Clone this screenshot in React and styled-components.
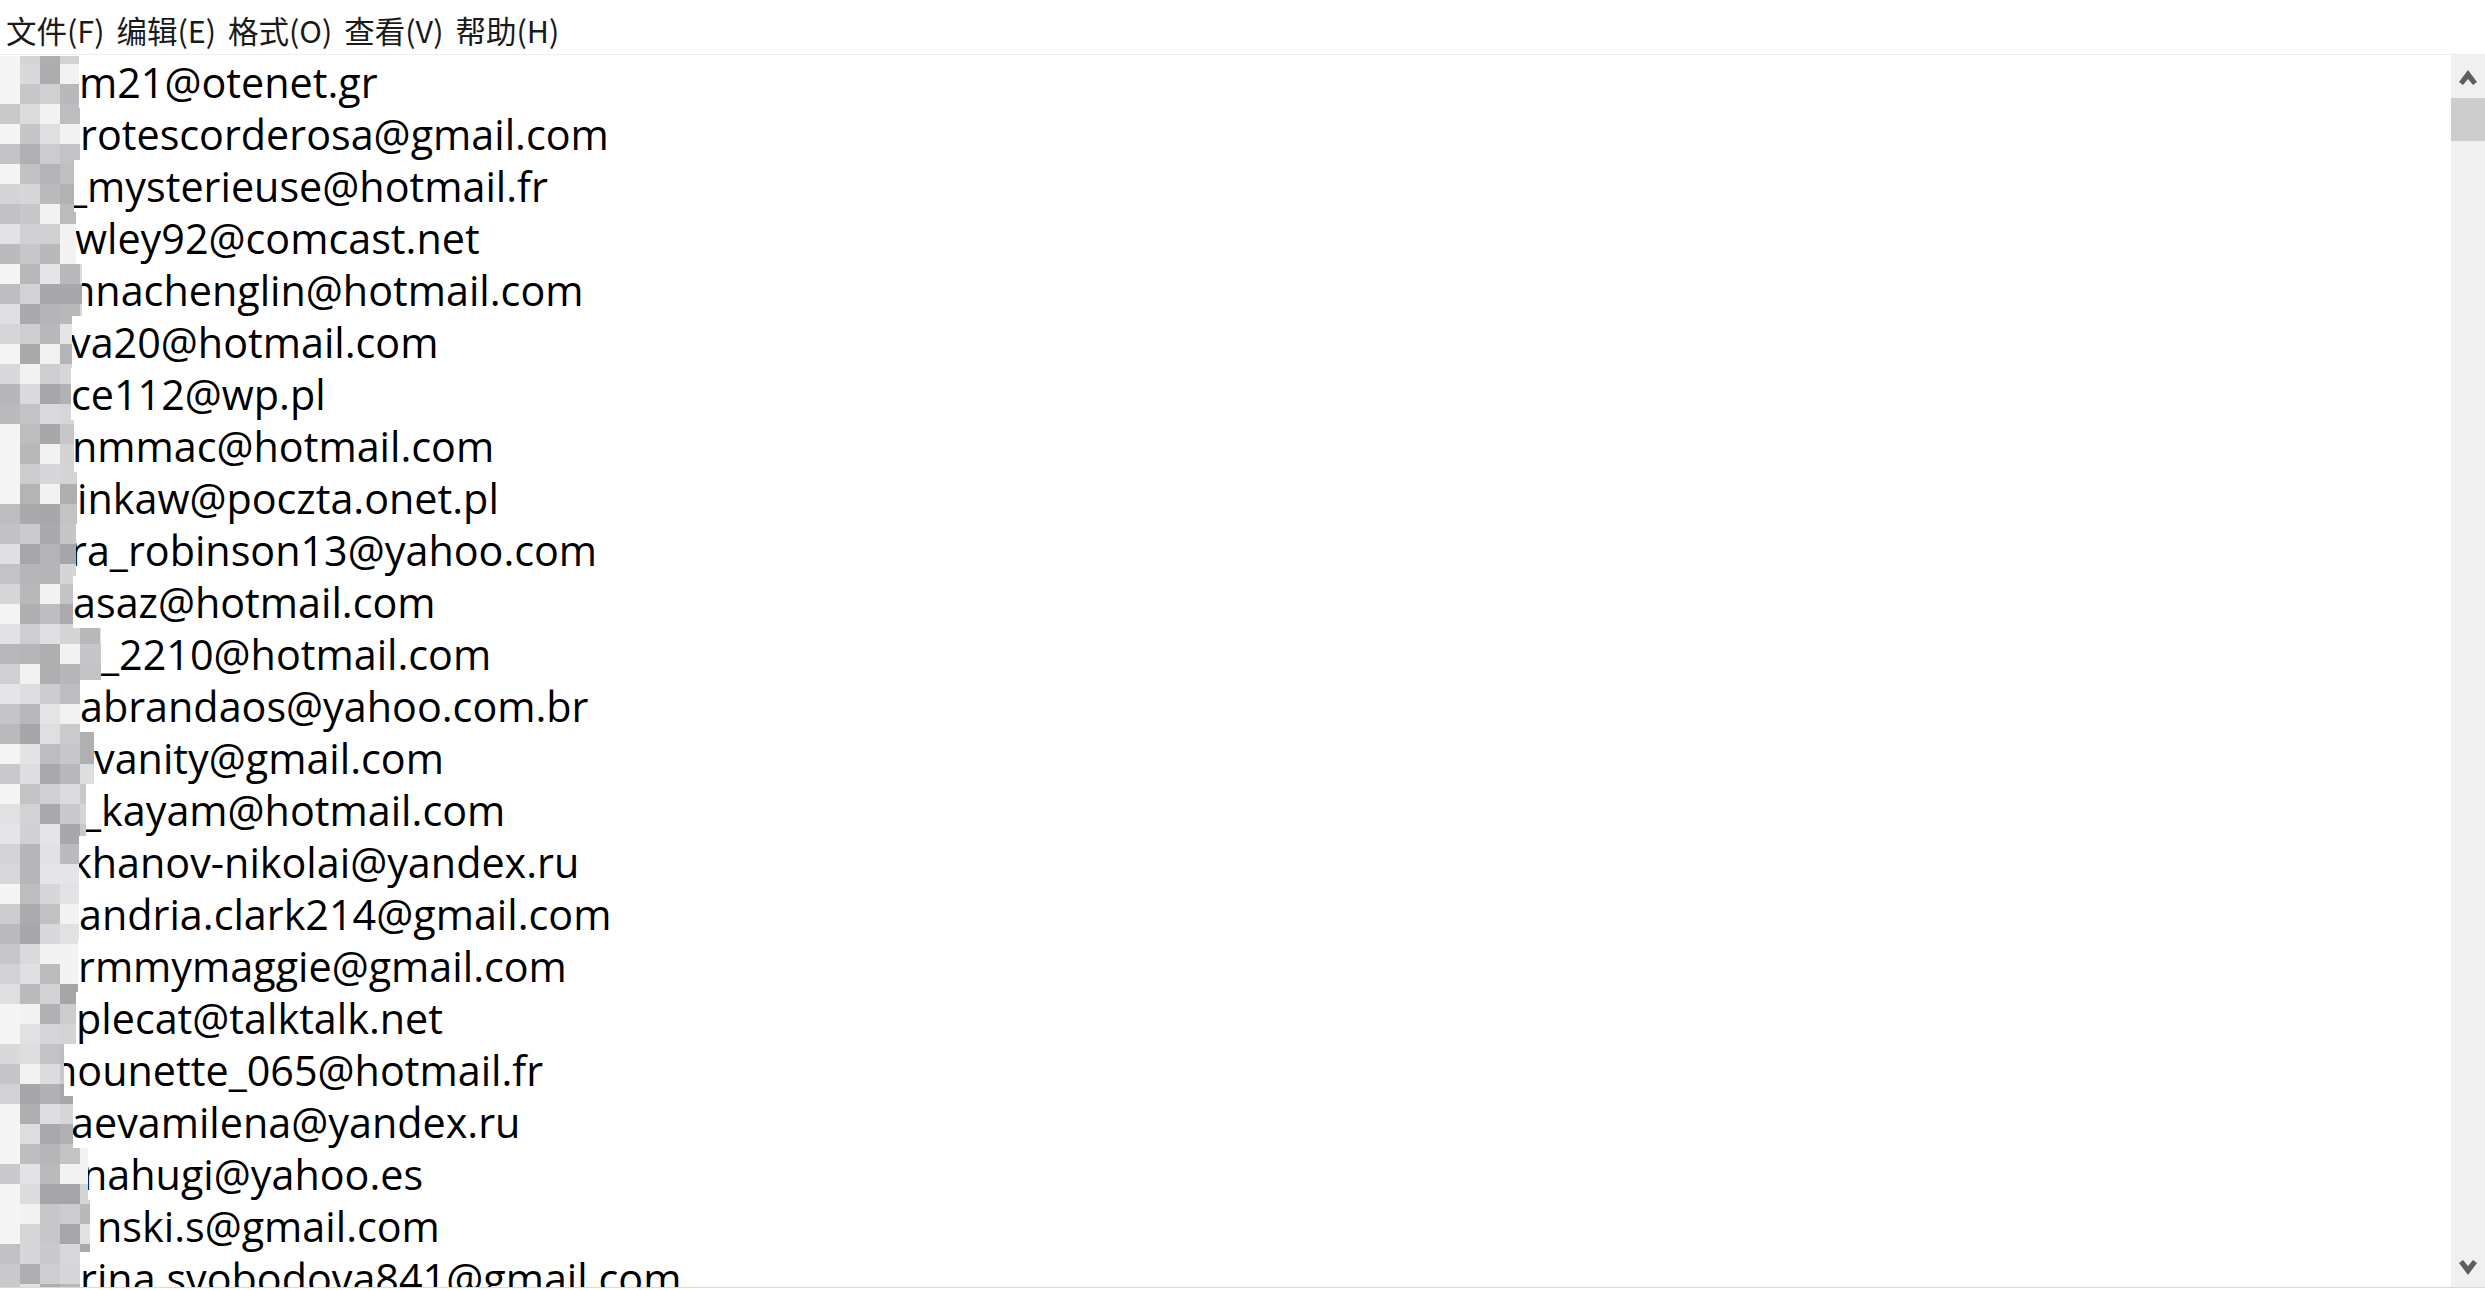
import styled, { createGlobalStyle } from 'styled-components';

const GlobalStyle = createGlobalStyle`
  html, body {
    margin: 0;
    padding: 0;
    background: #ffffff;
    overflow: hidden;
  }
`;

const LINE_HEIGHT = 52;
const BLOCK = 20;

const Window = styled.div`
  width: 2485px;
  height: 1290px;
  display: flex;
  flex-direction: column;
  background: #ffffff;
`;

const MenuBar = styled.div`
  height: 55px;
  display: flex;
  align-items: center;
  padding-left: 6px;
  padding-top: 6px;
  box-sizing: border-box;
  border-bottom: 1px solid #ededed;
  font-family: "Noto Sans CJK SC", "Noto Sans", sans-serif;
  font-size: 30.5px;
  color: #1a1a1a;
`;

const MenuItem = styled.span`
  margin-right: 12px;
  white-space: nowrap;
`;

const Editor = styled.div`
  flex: 1;
  display: flex;
  min-height: 0;
  border-bottom: 1px solid #d9d9d9;
  margin-bottom: 2px;
`;

const TextArea = styled.div`
  flex: 1;
  overflow: hidden;
  padding-top: 1px;
  font-family: "Open Sans", "Noto Sans", sans-serif;
  font-size: 41.3px;
  color: #000000;
`;

const Line = styled.div`
  display: flex;
  align-items: center;
  height: ${LINE_HEIGHT}px;
  white-space: nowrap;
`;

const MosaicBox = styled.svg`
  flex-shrink: 0;
  position: relative;
  z-index: 1;
`;

const LineText = styled.span`
  margin-left: ${(p) => p.$shift}px;
`;

const Scrollbar = styled.div`
  width: 34px;
  background: #f0f0f0;
  display: flex;
  flex-direction: column;
  align-items: center;
`;

const ArrowButton = styled.div`
  height: 43px;
  width: 100%;
  display: flex;
  align-items: ${(p) => (p.$down ? 'flex-end' : 'center')};
  justify-content: center;
  padding-bottom: ${(p) => (p.$down ? '11px' : '0')};
  box-sizing: border-box;
`;

const Thumb = styled.div`
  width: 100%;
  height: 43px;
  background: #cdcdcd;
`;

const Track = styled.div`
  flex: 1;
`;

// [text, x where the text starts, x where the mosaic ends]
const lines = [
  ['m21@otenet.gr', 79, 79],
  ['rotescorderosa@gmail.com', 80, 80],
  ['_mysterieuse@hotmail.fr', 69, 74],
  ['wley92@comcast.net', 75, 76],
  ['nnachenglin@hotmail.com', 70, 82],
  ['va20@hotmail.com', 70, 72],
  ['ce112@wp.pl', 71, 71],
  ['nmmac@hotmail.com', 72, 74],
  ['inkaw@poczta.onet.pl', 77, 77],
  ['ra_robinson13@yahoo.com', 70, 76],
  ['asaz@hotmail.com', 73, 73],
  ['_2210@hotmail.com', 101, 101],
  ['abrandaos@yahoo.com.br', 80, 80],
  ['vanity@gmail.com', 94, 94],
  ['_kayam@hotmail.com', 83, 86],
  ['khanov-nikolai@yandex.ru', 70, 79],
  ['andria.clark214@gmail.com', 79, 79],
  ['rmmymaggie@gmail.com', 78, 78],
  ['plecat@talktalk.net', 76, 76],
  ['nounette_065@hotmail.fr', 52, 64],
  ['aevamilena@yandex.ru', 71, 73],
  ['nahugi@yahoo.es', 82, 88],
  ['nski.s@gmail.com', 97, 90],
  ['rina.svobodova841@gmail.com', 80, 80],
];

function shade(row, col) {
  let h = (row * 374761393 + col * 668265263) >>> 0;
  h = ((h ^ (h >>> 13)) * 1274126177) >>> 0;
  const r = (h % 1000) / 1000;
  if (col === 0 && r < 0.35) return '#f5f5f5';
  if (r < 0.1) return '#f2f2f2';
  const v = Math.round(158 + r * 72);
  return `rgb(${v},${v},${v + 2})`;
}

function Mosaic({ index, width }) {
  const top = index * LINE_HEIGHT + 12;
  const first = Math.floor(top / BLOCK);
  const last = Math.floor((top + LINE_HEIGHT) / BLOCK);
  const cols = Math.ceil(width / BLOCK);
  const rects = [];
  for (let k = first; k <= last; k++) {
    for (let c = 0; c < cols; c++) {
      rects.push(
        <rect
          key={`${k}-${c}`}
          x={c * BLOCK}
          y={k * BLOCK - top}
          width={BLOCK}
          height={BLOCK}
          fill={shade(k, c)}
        />
      );
    }
  }
  return (
    <MosaicBox width={width} height={LINE_HEIGHT}>
      {rects}
    </MosaicBox>
  );
}

const Chevron = ({ down }) => (
  <svg width="18" height="16" viewBox="0 0 18 16">
    <path
      d={
        down
          ? 'M0 3 L4 0 L9 6 L14 0 L18 3 L9 15 Z'
          : 'M0 13 L4 16 L9 10 L14 16 L18 13 L9 1 Z'
      }
      fill="#5f5f5f"
    />
  </svg>
);

export default function App() {
  return (
    <>
      <GlobalStyle />
      <Window>
        <MenuBar>
          <MenuItem>文件(F)</MenuItem>
          <MenuItem>编辑(E)</MenuItem>
          <MenuItem>格式(O)</MenuItem>
          <MenuItem>查看(V)</MenuItem>
          <MenuItem>帮助(H)</MenuItem>
        </MenuBar>
        <Editor>
          <TextArea>
            {lines.map(([text, start, cover], i) => (
              <Line key={i}>
                <Mosaic index={i} width={cover} />
                <LineText $shift={start - cover}>{text}</LineText>
              </Line>
            ))}
          </TextArea>
          <Scrollbar>
            <ArrowButton>
              <Chevron />
            </ArrowButton>
            <Thumb />
            <Track />
            <ArrowButton $down>
              <Chevron down />
            </ArrowButton>
          </Scrollbar>
        </Editor>
      </Window>
    </>
  );
}
